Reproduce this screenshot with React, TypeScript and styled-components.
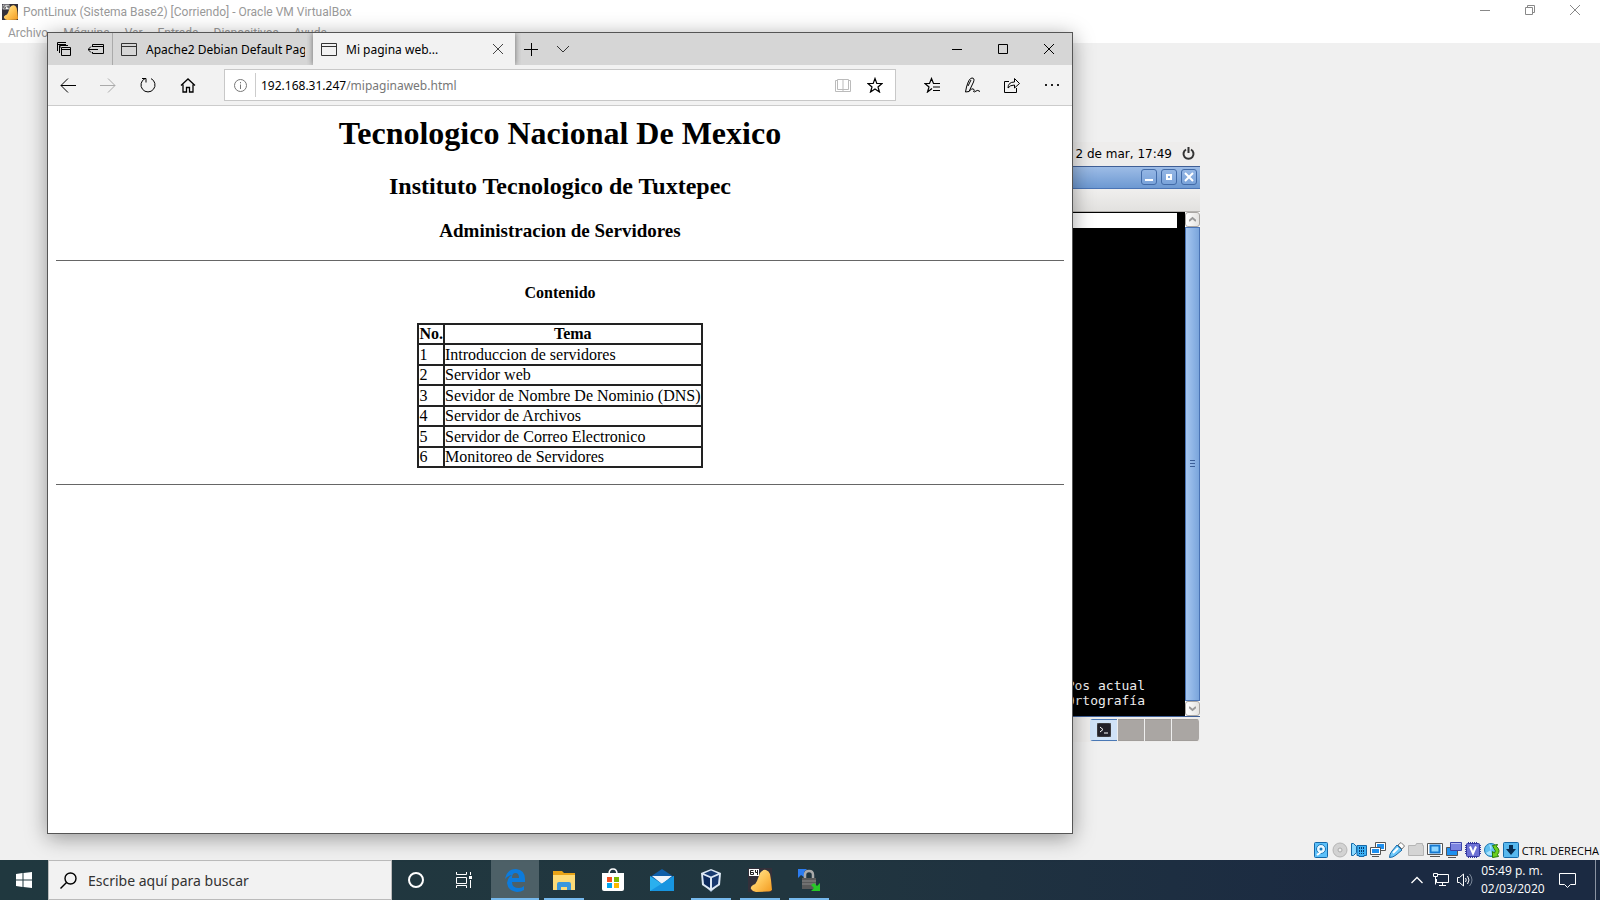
import React from 'react';
import styled, { createGlobalStyle } from 'styled-components';

const ui = '"Noto Sans", "Open Sans", sans-serif';

const Global = createGlobalStyle`
  *, *::before, *::after { box-sizing: border-box; }
  body { margin: 0; font-family: ${ui}; font-size: 12px; color: #000; overflow: hidden; }
  button { font: inherit; color: inherit; border: 0; padding: 0; background: none; }
  svg { display: block; flex: none; }
`;

const Desktop = styled.div`
  position: relative;
  display: flex;
  flex-direction: column;
  height: 100vh;
  background: #f0f0f0;
`;

/* ---------- virtual machine window ---------- */

const VmHeader = styled.header`
  background: #fff;
  color: #999;
  height: 43px;
  font-family: Roboto, sans-serif;
`;
const VmTitle = styled.div`
  display: flex;
  align-items: center;
  gap: 5px;
  height: 23px;
  padding: 0 3px 0 2px;
`;
const VmName = styled.span`
  flex: 1;
`;
const VmControls = styled.div`
  display: flex;
  align-self: flex-start;
  height: 20px;
`;
const VmControl = styled.button`
  display: grid;
  place-items: center;
  width: 45px;
`;
const VmMenu = styled.nav`
  display: flex;
  gap: 15px;
  padding-left: 8px;
  line-height: 21px;
`;
const VmArea = styled.main`
  flex: 1;
  display: flex;
  align-items: center;
  justify-content: center;
  min-height: 0;
`;
const VmStatus = styled.footer`
  display: flex;
  align-items: center;
  justify-content: flex-end;
  gap: 3px;
  height: 20px;
  padding-right: 1px;
  font-family: "Open Sans", sans-serif;
  font-size: 11px;
  white-space: nowrap;
`;

const Guest = styled.section`
  display: flex;
  flex-direction: column;
  width: 800px;
  height: 600px;
  background: #eeedec;
  font-family: "DejaVu Sans", sans-serif;
`;
const GuestPanel = styled.div`
  display: flex;
  align-items: center;
  justify-content: flex-end;
  gap: 10px;
  height: 24px;
  padding-right: 5px;
`;
const TermTitle = styled.div`
  display: flex;
  align-items: center;
  justify-content: flex-end;
  gap: 4px;
  height: 23px;
  padding-right: 3px;
  border-top: 1px solid #3f5f96;
  border-bottom: 1px solid #4a74b5;
  background: linear-gradient(#9dbce6, #6d99d2);
`;
const TermButton = styled.button`
  display: grid;
  place-items: center;
  width: 16px;
  height: 16px;
  border: 1px solid #426ba8;
  border-radius: 3px;
  background: linear-gradient(#94b6e4, #7aa3da);
`;
const TermMenu = styled.div`
  height: 23px;
  background: linear-gradient(#f0efee, #e2e1df);
  border-bottom: 1px solid #b5b3b0;
`;
const TermBody = styled.div`
  flex: 1;
  display: flex;
  background: #000;
  border-bottom: 1px solid #3f5f96;
`;
const TermScreen = styled.div`
  flex: 1;
  display: flex;
  flex-direction: column;
  justify-content: space-between;
  padding: 1px 8px 8px 0;
  color: #eee;
  font-family: "DejaVu Sans Mono", monospace;
  font-size: 13px;
  line-height: 15px;
`;
const TermBanner = styled.div`
  height: 15px;
  background: #fff;
`;
const TermHelp = styled.div`
  padding-right: 32px;
  text-align: right;
`;
const ScrollTrack = styled.div`
  display: flex;
  flex-direction: column;
  width: 15px;
  background: #fff;
`;
const ScrollArrow = styled.button`
  display: grid;
  place-items: center;
  height: 15px;
  border: 1px solid #a9a6a3;
  border-radius: 3px;
  background: linear-gradient(90deg, #fff, #e4e3e1);
`;
const ScrollThumb = styled.div`
  flex: 1;
  display: grid;
  place-items: center;
  border: 1px solid #4a74b5;
  background: linear-gradient(90deg, #a5c6f0, #7aa5dc);
`;
const GuestTaskbar = styled.div`
  display: flex;
  justify-content: flex-end;
  height: 25px;
  padding: 2px 1px 1px;
`;
const Pager = styled.div`
  display: grid;
  grid-template-columns: 27px 26px 26px 27px;
  gap: 1px;
  border-radius: 3px;
  overflow: hidden;
  background: #eee;
`;
const PagerCell = styled.button<{ $on?: boolean }>`
  display: grid;
  place-items: center;
  background: ${p => (p.$on ? '#d0e2f7' : '#aaa6a3')};
  border: solid ${p => (p.$on ? '#4a78b5' : '#a19d9a')};
  border-width: 1px 0;
`;

/* ---------- browser window ---------- */

const Browser = styled.section`
  position: absolute;
  left: 47px;
  top: 32px;
  right: 527px;
  bottom: 66px;
  display: flex;
  flex-direction: column;
  border: 1px solid #555;
  background: #fff;
  box-shadow: 0 4px 20px rgba(0, 0, 0, 0.38);
`;
const TabStrip = styled.div`
  display: flex;
  height: 32px;
  background: #d6d6d6;
`;
const StripTools = styled.div`
  display: flex;
  width: 65px;
  border-right: 1px solid #aaa;
`;
const StripButton = styled.button<{ $w?: number }>`
  display: grid;
  place-items: center;
  width: ${p => p.$w || 32}px;
`;
const Tab = styled.div<{ $active?: boolean }>`
  display: flex;
  align-items: center;
  gap: 9px;
  width: ${p => (p.$active ? 202 : 200)}px;
  padding: 0 8px;
  background: ${p => (p.$active ? '#f2f2f2' : 'transparent')};
  box-shadow: ${p => (p.$active ? '0 0 6px rgba(0, 0, 0, 0.5)' : 'none')};
  clip-path: inset(0 -6px);
`;
const TabName = styled.span`
  flex: 1;
  overflow: hidden;
  white-space: nowrap;
`;
const Spacer = styled.div`
  flex: 1;
`;
const Toolbar = styled.div`
  display: flex;
  align-items: center;
  height: 41px;
  background: #f2f2f2;
  border-bottom: 1px solid #ccc;
`;
const ToolButton = styled.button`
  display: grid;
  place-items: center;
  width: 40px;
  height: 40px;
`;
const Address = styled.div`
  flex: 1;
  display: flex;
  align-items: center;
  height: 32px;
  margin: 0 16px;
  padding-right: 4px;
  border: 1px solid #c8c8c8;
  background: #fff;
`;
const InfoButton = styled.button`
  display: grid;
  place-items: center;
  width: 31px;
  height: 24px;
  border-right: 1px solid #ccc;
`;
const UrlField = styled.div`
  flex: 1;
  position: relative;
  padding: 1px 0 0 5px;
  line-height: 20px;
`;
const UrlText = styled.div`
  color: #777;
  b { color: #000; font-weight: 400; }
`;
const UrlInput = styled.input`
  position: absolute;
  inset: 0;
  width: 100%;
  border: 0;
  padding: 0 5px;
  background: transparent;
  font: inherit;
  outline: 0;
`;
const AddressButton = styled.button`
  display: grid;
  place-items: center;
  width: 32px;
  height: 30px;
`;

const Page = styled.article`
  flex: 1;
  padding: 9px 8px 8px;
  text-align: center;
  font-family: "Liberation Serif", serif;
  font-size: 16px;
  hr { margin: 0; border: 0; border-top: 1px solid #666; }
`;
const H1 = styled.h1`
  margin: 0 0 21px;
  font-size: 32px;
  line-height: 37px;
`;
const H2 = styled.h2`
  margin: 0 0 20px;
  font-size: 24px;
  line-height: 27px;
`;
const H3 = styled.h3`
  margin: 0 0 18px;
  font-size: 19px;
  line-height: 22px;
`;
const H4 = styled.h4`
  margin: 23px 0 21px;
  font-size: 16px;
  line-height: 18px;
`;
const Topics = styled.table`
  height: 145px;
  margin: 0 auto 16px;
  border-collapse: collapse;
  line-height: 18px;
  text-align: left;
  th, td { border: 2px solid #222; padding: 0; vertical-align: bottom; }
  th { text-align: center; }
`;

/* ---------- host taskbar ---------- */

const Taskbar = styled.footer`
  display: flex;
  align-items: stretch;
  height: 40px;
  background: linear-gradient(90deg, #20383f, #21363f 50%, #1b2a42 85%);
  color: #fff;
`;
const TaskButton = styled.button<{ $active?: boolean; $open?: boolean }>`
  display: grid;
  place-items: center;
  width: 48px;
  background:
    linear-gradient(#76b9ed, #76b9ed) center bottom / ${p => (p.$active ? '48px' : p.$open ? '40px' : '0')} 2px no-repeat,
    ${p => (p.$active ? '#4d6067' : 'transparent')};
`;
const PinnedApps = styled.div`
  display: flex;
  gap: 1px;
  padding-left: 3px;
`;
const Search = styled.label`
  display: flex;
  align-items: center;
  gap: 11px;
  width: 344px;
  padding: 0 11px;
  border: 1px solid #bbb;
  background: #f2f2f2;
`;
const SearchInput = styled.input`
  flex: 1;
  min-width: 0;
  border: 0;
  padding: 0;
  outline: 0;
  background: none;
  font-family: ${ui};
  font-size: 14px;
  &::placeholder { color: #333; opacity: 1; }
`;
const TrayButton = styled.button`
  display: grid;
  place-items: center;
  width: 24px;
`;
const Clock = styled.div`
  width: 66px;
  padding: 2px 0 0 4px;
  font-family: "Open Sans", sans-serif;
  line-height: 18px;
  text-align: center;
  white-space: nowrap;
`;
const NoticeButton = styled(TrayButton)`
  width: 48px;
  margin-right: 4px;
`;
const PeekButton = styled.button`
  width: 5px;
  border-left: 1px solid #8a93a2;
`;

/* ---------- drawings ---------- */

type LineProps = { s?: number; c?: string; w?: number; h?: number; children: React.ReactNode };
const Line = ({ s = 16, c = '#000', w = 1, h, children }: LineProps) => (
  <svg width={s} height={h || s} viewBox={`0 0 ${s} ${h || s}`} fill="none" stroke={c} strokeWidth={w}>{children}</svg>
);

const VmLogo = ({ s }: { s: number }) => (
  <svg width={s} height={s} viewBox="0 0 24 24" aria-hidden="true">
    <defs><linearGradient id="amber" x1="0" y1="0" x2="1" y2="1"><stop offset="0" stopColor="#ffe9a0" /><stop offset=".5" stopColor="#ffc658" /><stop offset="1" stopColor="#f29a20" /></linearGradient></defs>
    <path d="M0 0h24v24H0z" fill="#33303a" />
    <path d="M12 5q3-4 6-3 3 1 4 4l1 6 1 10q-2 2-5 1.500L8 24q-3 0-5-3-1-2 2-4 3-1 4-4z" fill="url(#amber)" />
    <path d="M1 1h10v7H1z" fill="#fff" />
    <path d="M5.500 2.500h-3v4h3v-2h-3M7.500 2v2.500H10M9.500 2v5" fill="none" stroke="#222" />
  </svg>
);

const PageGlyph = () => <Line c="#333"><path d="M.5 2.500h15v12H.5zM.5 5.500h15" /></Line>;

const StatusIcons = () => (
  <>
    <svg width="16" height="16" viewBox="0 0 16 16"><rect x="1.500" y=".5" width="13" height="15" rx="1" fill="#5bc0fa" stroke="#1468a8" /><circle cx="8" cy="7" r="4.500" fill="#e8f7ff" stroke="#1876b8" /><circle cx="8" cy="7" r="1.500" fill="#1876b8" /><path d="M4 13l4-3" stroke="#fff" strokeWidth="2" /></svg>
    <svg width="16" height="16" viewBox="0 0 16 16"><circle cx="8" cy="8" r="7" fill="#d2d2d2" stroke="#b5b5b5" /><circle cx="8" cy="8" r="2" fill="#eee" stroke="#aaa" /></svg>
    <svg width="16" height="16" viewBox="0 0 16 16"><path d="M.5 1.500h2l3 3v6l-3 3h-2z" fill="#8ad8ff" stroke="#1468a8" /><path d="M6 3.500h9.500v10H13v1H8v-1H6z" fill="#3cb0f5" stroke="#1468a8" /><path d="M8.500 5v7M10.500 5v7M12.500 5v7" stroke="#063c70" strokeDasharray="2 1" /></svg>
    <svg width="16" height="16" viewBox="0 0 16 16" stroke="#555"><path d="M5.500 .5h10v8h-10z" fill="#fff" /><path d="M7 2h7v5H7z" fill="#1e90f0" stroke="none" /><path d="M.5 5.500h10v7H.5z" fill="#fff" /><path d="M2 7h7v4H2z" fill="#1e90f0" stroke="none" /><path d="M2 14.500h7" /></svg>
    <svg width="16" height="16" viewBox="0 0 16 16"><path d="M9 3l3-2.500L15.500 4 13 7z" fill="#fff" stroke="#777" /><path d="M8 3l5 5-6 5q-3 2.500-6.500 2.500Q.5 12 3 9z" fill="#6cc8fb" stroke="#1468a8" /><path d="M4 11l5-5" stroke="#fff" strokeWidth="2" /></svg>
    <svg width="16" height="16" viewBox="0 0 16 16"><path d="M.5 13.500v-10h7l1-2h6v2h1v10z" fill="#d4d4d4" stroke="#b4b4b4" /></svg>
    <svg width="16" height="16" viewBox="0 0 16 16"><path d="M.5 1.500h15v11H.5z" fill="#fff" stroke="#555" /><path d="M3.500 3.500h9v7h-9z" fill="#8cd4ff" stroke="#1478d0" strokeWidth="2" /><path d="M3 14.500h10" stroke="#555" /></svg>
    <svg width="16" height="16" viewBox="0 0 16 16"><path d="M.5 5.500h11v8H.5z" fill="#1e90f0" stroke="#555" /><path d="M2 15.500h8" stroke="#555" /><path d="M4.500 .5h11v8h-11z" fill="#7c84e0" stroke="#3c44a8" /><path d="M5 1.500h10" stroke="#b8bcf4" /></svg>
    <svg width="16" height="16" viewBox="0 0 16 16"><path d="M.5 3v10M15.500 3v10M3 .5h10M3 15.500h10" stroke="#3438a0" strokeDasharray="1 1" /><rect x="1.500" y="1.500" width="13" height="13" rx="1" fill="#6c70d4" stroke="#3438a0" /><path d="M5 4.500l3 7 3-7" fill="none" stroke="#fff" strokeWidth="2" /></svg>
    <svg width="16" height="16" viewBox="0 0 16 16"><circle cx="7" cy="8" r="6.500" fill="#62c0f0" stroke="#1c78b0" /><path d="M5 2q4 2 2 6l-5 3q2 3 6 2" fill="#a8e4ff" /><path d="M8.500 3.500l5-1-1 2q4.500 4 1 8l1 2-6 1v-6l2 1.500q2-2-.5-4.500z" fill="#6cd020" stroke="#287808" /></svg>
    <svg width="16" height="16" viewBox="0 0 16 16"><rect x=".5" y=".5" width="15" height="15" rx="1" fill="#58b8ee" stroke="#1468a8" /><path d="M6 3h4v4h3l-5 6-5-6h3z" fill="#082c50" /></svg>
  </>
);

const EdgeLogo = () => (
  <svg width="24" height="24" viewBox="0 0 24 24"><path d="M2 11Q4 1 13 1q9 1 9 10v3H9q0 6 7 6 3 0 5-2v4q-3 2-7 2-9-1-10-9 0-5 5-8-5 1-7 4zM9 10h7q0-5-3.500-5T9 10z" fill="#0c7bdc" /></svg>
);
const Explorer = () => (
  <svg width="24" height="24" viewBox="0 0 24 24"><path d="M1 3h9l2 2h11v17H1z" fill="#e8a317" /><path d="M1 7h22v15H1z" fill="#fddb78" /><path d="M5 22v-6q0-2 2-2h10q2 0 2 2v6h-4v-3H9v3z" fill="#3a97dd" /></svg>
);
const Store = () => (
  <svg width="24" height="24" viewBox="0 0 24 24"><path d="M8 6q0-5 4-5t4 5" fill="none" stroke="#fff" strokeWidth="1.500" /><path d="M1 5h22v16q0 2-2 2H3q-2 0-2-2z" fill="#fff" /><path d="M6 9h5v5H6z" fill="#f25022" /><path d="M13 9h5v5h-5z" fill="#7fba00" /><path d="M6 15h5v5H6z" fill="#00a4ef" /><path d="M13 15h5v5h-5z" fill="#ffb900" /></svg>
);
const Mail = () => (
  <svg width="24" height="24" viewBox="0 0 24 24"><path d="M0 9l12-8 12 8v14H0z" fill="#0f5ea8" /><path d="M2 8h20l-10 8z" fill="#eef4fa" /><path d="M0 8l12 8 12-8v15H0z" fill="#2ab0ee" /><path d="M0 23L24 8v15z" fill="#1795e0" /></svg>
);
const Cube = () => (
  <svg width="24" height="24" viewBox="0 0 24 24"><path d="M7 19h10l-5 5z" fill="#9db4d0" /><path d="M12 1l10 4-1 12-9 6-9-6L2 5z" fill="#dce8f4" /><path d="M12 2.500L19 5.500l-7 3-7-3z" fill="#173a70" /><path d="M4 7l7 3v10l-6-4z" fill="#0d2a5c" /><path d="M20 7l-7 3v10l6-4z" fill="#17386e" /></svg>
);
const Lock = () => (
  <svg width="24" height="24" viewBox="0 0 24 24"><path d="M1 1h9L7 4l2 3-2 2-3-2-3 3z" fill="#2c7cf0" /><path d="M8 11V7q0-4 4-4t4 4v4" fill="none" stroke="#aaa" strokeWidth="2.500" /><path d="M5 10h14v11H5z" fill="#5a5a5a" /><path d="M5 13h14M5 16h14" stroke="#888" /><path d="M23 23h-9l3-3-3-3 3-2 3 3 3-3z" fill="#28c828" /></svg>
);

const topics = [
  'Introduccion de servidores',
  'Servidor web',
  'Sevidor de Nombre De Nominio (DNS)',
  'Servidor de Archivos',
  'Servidor de Correo Electronico',
  'Monitoreo de Servidores',
];

export default function App() {
  return (
    <Desktop>
      <Global />
      <VmHeader>
        <VmTitle>
          <VmLogo s={16} />
          <VmName>PontLinux (Sistema Base2) [Corriendo] - Oracle VM VirtualBox</VmName>
          <VmControls>
            <VmControl aria-label="Minimizar"><Line s={10} c="#888"><path d="M0 5.500h10" /></Line></VmControl>
            <VmControl aria-label="Restaurar"><Line s={10} c="#888"><path d="M.5 2.500h7v7h-7zM2.500 2.500v-2h7v7h-2" /></Line></VmControl>
            <VmControl aria-label="Cerrar"><Line s={10} c="#888"><path d="M0 0l10 10M10 0L0 10" /></Line></VmControl>
          </VmControls>
        </VmTitle>
        <VmMenu>
          {['Archivo', 'Máquina', 'Ver', 'Entrada', 'Dispositivos', 'Ayuda'].map(m => <span key={m}>{m}</span>)}
        </VmMenu>
      </VmHeader>

      <VmArea>
        <Guest>
          <GuestPanel>
            <span>2 de mar, 17:49</span>
            <Line s={13} c="#333" w={2}><path d="M4 2.500a5 5 0 1 0 5 0M6.500 0v6" /></Line>
          </GuestPanel>
          <TermTitle>
            <TermButton aria-label="Minimizar terminal"><Line s={10} c="#fff" w={2}><path d="M1 8h8" /></Line></TermButton>
            <TermButton aria-label="Maximizar terminal"><Line s={10} c="#fff" w={2}><path d="M3 3h4v4H3z" /></Line></TermButton>
            <TermButton aria-label="Cerrar terminal"><Line s={10} c="#fff" w={2}><path d="M1 1l8 8M9 1L1 9" /></Line></TermButton>
          </TermTitle>
          <TermMenu />
          <TermBody>
            <TermScreen>
              <TermBanner />
              <TermHelp>Pos actual<br />Ortografía</TermHelp>
            </TermScreen>
            <ScrollTrack>
              <ScrollArrow aria-label="Subir"><Line s={7} c="#999" w={2}><path d="M0 5l3.500-3L7 5" /></Line></ScrollArrow>
              <ScrollThumb><Line s={5} h={7} c="#3c5f98"><path d="M0 .5h5M0 3.500h5M0 6.500h5" /></Line></ScrollThumb>
              <ScrollArrow aria-label="Bajar"><Line s={7} c="#999" w={2}><path d="M0 2l3.500 3L7 2" /></Line></ScrollArrow>
            </ScrollTrack>
          </TermBody>
          <GuestTaskbar>
            <Pager>
              <PagerCell $on aria-label="Espacio 1">
                <svg width="14" height="14" viewBox="0 0 14 14"><rect width="14" height="14" rx="2" fill="#222028" stroke="#555" /><path d="M3 4l3 2.500L3 9M7 10h4" fill="none" stroke="#fff" /></svg>
              </PagerCell>
              <PagerCell aria-label="Espacio 2" />
              <PagerCell aria-label="Espacio 3" />
              <PagerCell aria-label="Espacio 4" />
            </Pager>
          </GuestTaskbar>
        </Guest>
      </VmArea>
      <VmStatus><StatusIcons /><span>CTRL DERECHA</span></VmStatus>

      <Browser>
        <TabStrip>
          <StripTools>
            <StripButton aria-label="Pestañas reservadas"><Line><path d="M5.500 6.500h9v8h-9zM5.500 8.500h9M3.500 12V4.500H12M1.500 10V1.500H10M1.500 3.500H10M3.500 6H5" /></Line></StripButton>
            <StripButton aria-label="Reservar pestañas"><Line><path d="M4.500 6V3.500h11v9h-11V11M4.500 5.500h11M0 8.500h10M3 5.500l-3 3 3 3" /></Line></StripButton>
          </StripTools>
          <Tab><PageGlyph /><TabName>Apache2 Debian Default Page</TabName></Tab>
          <Tab $active>
            <PageGlyph /><TabName>Mi pagina web...</TabName>
            <button aria-label="Cerrar pestaña"><Line s={18} c="#444"><path d="M4 4l10 10M14 4L4 14" /></Line></button>
          </Tab>
          <StripButton aria-label="Nueva pestaña"><Line s={14}><path d="M0 7.500h14M7.500 1v14" /></Line></StripButton>
          <StripButton aria-label="Vistas previas"><Line s={14} c="#333"><path d="M1 4l6 6 6-6" /></Line></StripButton>
          <Spacer />
          <StripButton $w={46} aria-label="Minimizar"><Line s={10}><path d="M0 5.500h10" /></Line></StripButton>
          <StripButton $w={46} aria-label="Maximizar"><Line s={10}><path d="M.5 .5h9v9h-9z" /></Line></StripButton>
          <StripButton $w={46} aria-label="Cerrar"><Line s={10}><path d="M0 0l10 10M10 0L0 10" /></Line></StripButton>
        </TabStrip>
        <Toolbar>
          <ToolButton aria-label="Atrás"><Line><path d="M1 8.500h15M8 1.500l-7 7 7 7" /></Line></ToolButton>
          <ToolButton aria-label="Adelante"><Line c="#aaa"><path d="M0 8.500h15M8 1.500l7 7-7 7" /></Line></ToolButton>
          <ToolButton aria-label="Actualizar"><Line><path d="M5 1.600a7 7 0 1 0 6 0M2 1.500h4v4" /></Line></ToolButton>
          <ToolButton aria-label="Inicio"><Line w={1.3}><path d="M1 8.500L8 2l7 6.500M3 7.500v7.500h3.500v-4.500h3v4.500H13V7.500" /></Line></ToolButton>
          <Address>
            <InfoButton aria-label="Información del sitio"><Line s={13} c="#777"><circle cx="6.500" cy="6.500" r="6" /><path d="M6.500 5.500V10M6.500 3v1.300" /></Line></InfoButton>
            <UrlField>
              <UrlText><b>192.168.31.247</b>/mipaginaweb.html</UrlText>
              <UrlInput aria-label="Dirección" />
            </UrlField>
            <AddressButton aria-label="Vista de lectura"><Line c="#bbb"><path d="M8 2.500H2.500v10H8M8 2.500h5.500v10H8M8 2.500v12M2.500 3.500h-2v11h15v-11h-2" /></Line></AddressButton>
            <AddressButton aria-label="Favoritos"><Line w={1.2}><path d="M8 1.500l1.800 5H15l-4 3.500 1.500 5L8 12l-4.500 3L5 10 1 6.500h5.200z" /></Line></AddressButton>
          </Address>
          <ToolButton aria-label="Concentrador"><Line w={1.2}><path d="M8 11.500L3.500 15 5 10 1 6.500h4.500L7.500 1.500l2 5H16M9 10h7M9 13.500h7" /></Line></ToolButton>
          <ToolButton aria-label="Notas"><Line><path d="M1.500 15l1-5Q5 1 8 1t1.500 4L5 14.500l-3.500.5M4 9l3-6M5 14.500Q8 10.500 9.500 12t0 2.500q1 1 2.500-.5t4 .5" /></Line></ToolButton>
          <ToolButton aria-label="Compartir"><Line><path d="M5 4.500H.5v11h12V11M4 11q0-6 6.500-6V1.500l5 5-5 4.500V8Q6 8 4 11z" /></Line></ToolButton>
          <ToolButton aria-label="Más"><Line c="none"><path d="M1 7h2v2H1zM7 7h2v2H7zM13 7h2v2h-2z" fill="#222" /></Line></ToolButton>
        </Toolbar>
        <Page>
          <H1>Tecnologico Nacional De Mexico</H1>
          <H2>Instituto Tecnologico de Tuxtepec</H2>
          <H3>Administracion de Servidores</H3>
          <hr />
          <H4>Contenido</H4>
          <Topics>
            <thead><tr><th>No.</th><th>Tema</th></tr></thead>
            <tbody>
              {topics.map((t, i) => <tr key={t}><td>{i + 1}</td><td>{t}</td></tr>)}
            </tbody>
          </Topics>
          <hr />
        </Page>
      </Browser>

      <Taskbar>
        <TaskButton aria-label="Inicio de Windows">
          <svg width="16" height="16" viewBox="0 0 16 16" fill="#fff"><path d="M0 2l6.500-1v6.500H0zM7.500 1L16 0v7.500H7.500zM0 8.500h6.500V15L0 14zM7.500 8.500H16V16l-8.500-1z" /></svg>
        </TaskButton>
        <Search>
          <Line s={17} w={1.4}><circle cx="10.500" cy="6.500" r="5.500" /><path d="M6.500 10.500L.5 16.500" /></Line>
          <SearchInput placeholder="Escribe aquí para buscar" aria-label="Buscar" />
        </Search>
        <TaskButton aria-label="Cortana"><Line c="#fff" w={2}><circle cx="8" cy="8" r="7" /></Line></TaskButton>
        <TaskButton aria-label="Vista de tareas"><Line c="#fff"><path d="M.5 0v2.500h10V0M.5 5.500h10v6H.5zM.5 16v-2.500h10V16M14.500 0v3M14.500 8v8" /><path d="M13 4h3v3h-3z" fill="#fff" stroke="none" /></Line></TaskButton>
        <PinnedApps>
          <TaskButton $active aria-label="Edge"><EdgeLogo /></TaskButton>
          <TaskButton $open aria-label="Explorador"><Explorer /></TaskButton>
          <TaskButton aria-label="Tienda"><Store /></TaskButton>
          <TaskButton aria-label="Correo"><Mail /></TaskButton>
          <TaskButton $open aria-label="VirtualBox"><Cube /></TaskButton>
          <TaskButton $open aria-label="PontLinux"><VmLogo s={24} /></TaskButton>
          <TaskButton $open aria-label="Transferencia"><Lock /></TaskButton>
        </PinnedApps>
        <Spacer />
        <TrayButton aria-label="Iconos ocultos"><Line s={12} c="#fff" w={1.3}><path d="M.5 9L6 3.500 11.500 9" /></Line></TrayButton>
        <TrayButton aria-label="Red"><Line c="#fff"><path d="M5 2.500h10.500v8h-12V7M.5 1.500h4v3h-4zM2.500 4.500v8M9.500 10.500v3M6 13.500h7" /></Line></TrayButton>
        <TrayButton aria-label="Volumen"><Line c="#fff"><path d="M.5 5.500h2l4-3.500v12l-4-3.500h-2zM8.500 6q1.500 2 0 4M10.500 4q3 4 0 8" /><path d="M12.500 2q5 6 0 12" stroke="#7a8798" /></Line></TrayButton>
        <Clock>05:49 p. m.<br />02/03/2020</Clock>
        <NoticeButton aria-label="Notificaciones"><Line s={17} c="#fff"><path d="M.5 1.500h16v11h-5l-3 3-3-3h-5z" /></Line></NoticeButton>
        <PeekButton aria-label="Mostrar escritorio" />
      </Taskbar>
    </Desktop>
  );
}
